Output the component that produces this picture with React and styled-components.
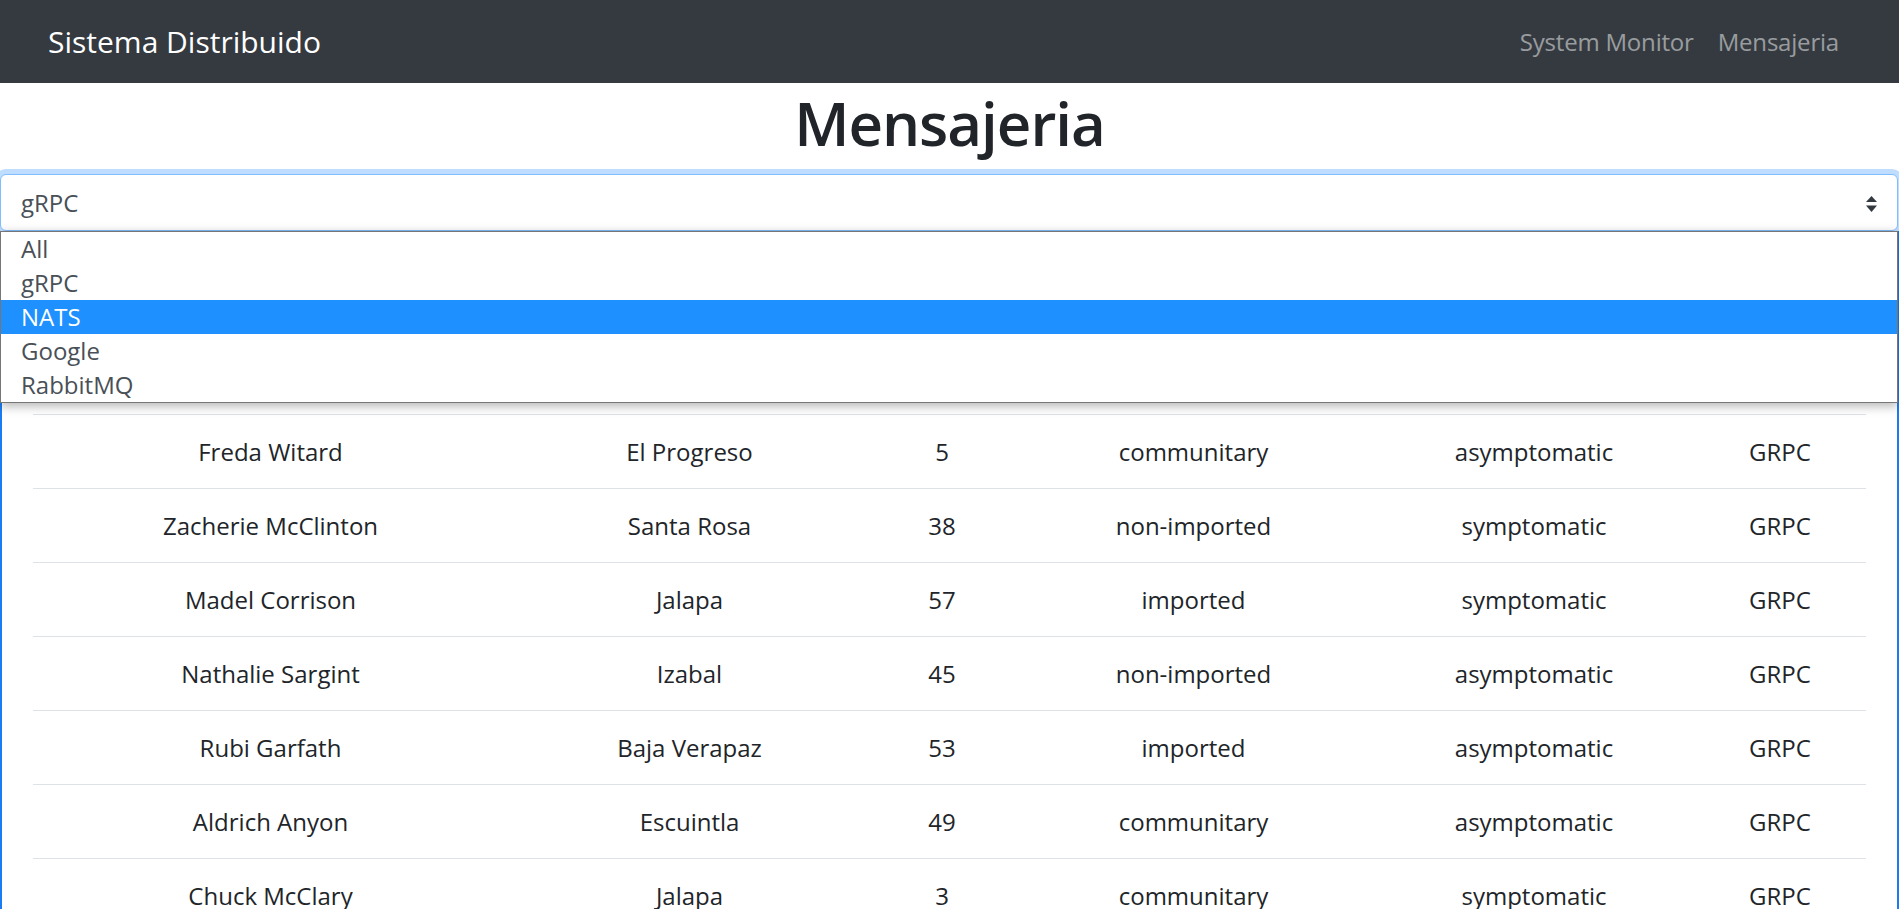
import React from "react";
import styled, { createGlobalStyle } from "styled-components";

const GlobalStyle = createGlobalStyle`
  html, body { margin: 0; padding: 0; background: #fff; }
  body {
    font-family: "Open Sans", "Noto Sans", "Liberation Sans", sans-serif;
    color: #212529;
  }
  * { box-sizing: border-box; }
`;

const Page = styled.div`
  height: 100vh;
  overflow: hidden;
`;

const Navbar = styled.nav`
  height: 83px;
  background: #343a40;
  display: flex;
  align-items: center;
  justify-content: space-between;
  padding: 0 48px 0 48px;
`;

const Brand = styled.a`
  font-size: 30px;
  line-height: 45px;
  color: #fff;
  text-decoration: none;
`;

const NavLinks = styled.div`
  display: flex;
`;

const NavLink = styled.a`
  font-size: 24px;
  line-height: 36px;
  padding: 0 12px;
  color: rgba(255, 255, 255, 0.5);
  text-decoration: none;
  letter-spacing: -0.2px;
`;

const Title = styled.h1`
  margin: 4px 0 15px;
  text-align: center;
  font-size: 60px;
  line-height: 72px;
  font-weight: 600;
  letter-spacing: -1px;
  color: #212529;
`;

const SelectArea = styled.div`
  position: relative;
  margin-right: 1px;
  z-index: 5;
`;

const SelectBox = styled.div`
  height: 57px;
  border: 1px solid #80bdff;
  border-radius: 6px;
  box-shadow: 0 0 0 5px rgba(0, 123, 255, 0.25);
  background: #fff;
  display: flex;
  align-items: center;
  justify-content: space-between;
  padding: 0 20px 0 20px;
  font-size: 24px;
  line-height: 36px;
  color: #495057;
`;

const Arrows = styled.svg`
  width: 11px;
  height: 16px;
  margin-top: 3px;
  display: block;
`;

const Popup = styled.div`
  position: absolute;
  top: 57px;
  left: 0;
  right: 0;
  background: #fff;
  border: 1px solid #767676;
  box-shadow: 0 3px 10px rgba(0, 0, 0, 0.3);
`;

const Option = styled.div`
  height: 34px;
  line-height: 34px;
  padding: 0 20px;
  font-size: 24px;
  color: ${(p) => (p.$selected ? "#fff" : "#495057")};
  background: ${(p) => (p.$selected ? "#1e90ff" : "#fff")};
`;

const Panel = styled.div`
  border-left: 2px solid #1b7cf2;
  border-right: 2px solid #1b7cf2;
  padding: 109px 31px 0;
`;

const Row = styled.div`
  display: grid;
  grid-template-columns: 475fr 363fr 142fr 361fr 320fr 172fr;
  border-top: 1px solid #dee2e6;
`;

const Cell = styled.div`
  padding: 19px 18px 18px;
  font-size: 24px;
  line-height: 36px;
  text-align: center;
  color: #212529;
  white-space: nowrap;
  font-weight: ${(p) => (p.$head ? 700 : 400)};
`;

const options = ["All", "gRPC", "NATS", "Google", "RabbitMQ"];

const rows = [
  ["Freda Witard", "El Progreso", "5", "communitary", "asymptomatic", "GRPC"],
  ["Zacherie McClinton", "Santa Rosa", "38", "non-imported", "symptomatic", "GRPC"],
  ["Madel Corrison", "Jalapa", "57", "imported", "symptomatic", "GRPC"],
  ["Nathalie Sargint", "Izabal", "45", "non-imported", "asymptomatic", "GRPC"],
  ["Rubi Garfath", "Baja Verapaz", "53", "imported", "asymptomatic", "GRPC"],
  ["Aldrich Anyon", "Escuintla", "49", "communitary", "asymptomatic", "GRPC"],
  ["Chuck McClary", "Jalapa", "3", "communitary", "symptomatic", "GRPC"],
];

const headers = ["Name", "Location", "Age", "Infected Type", "State", "Way"];

export default function App() {
  return (
    <Page>
      <GlobalStyle />
      <Navbar>
        <Brand href="#">Sistema Distribuido</Brand>
        <NavLinks>
          <NavLink href="#">System Monitor</NavLink>
          <NavLink href="#">Mensajeria</NavLink>
        </NavLinks>
      </Navbar>
      <Title>Mensajeria</Title>
      <SelectArea>
        <SelectBox>
          <span>gRPC</span>
          <Arrows viewBox="0 0 11 16">
            <polygon points="0,6 5.5,0 11,6" fill="#343a40" />
            <polygon points="0,9.5 11,9.5 5.5,16" fill="#343a40" />
          </Arrows>
        </SelectBox>
        <Popup>
          {options.map((o) => (
            <Option key={o} $selected={o === "NATS"}>
              {o}
            </Option>
          ))}
        </Popup>
      </SelectArea>
      <Panel>
        <Row>
          {headers.map((h) => (
            <Cell key={h} $head>
              {h}
            </Cell>
          ))}
        </Row>
        {rows.map((r, i) => (
          <Row key={i}>
            {r.map((c, j) => (
              <Cell key={j}>{c}</Cell>
            ))}
          </Row>
        ))}
      </Panel>
    </Page>
  );
}
